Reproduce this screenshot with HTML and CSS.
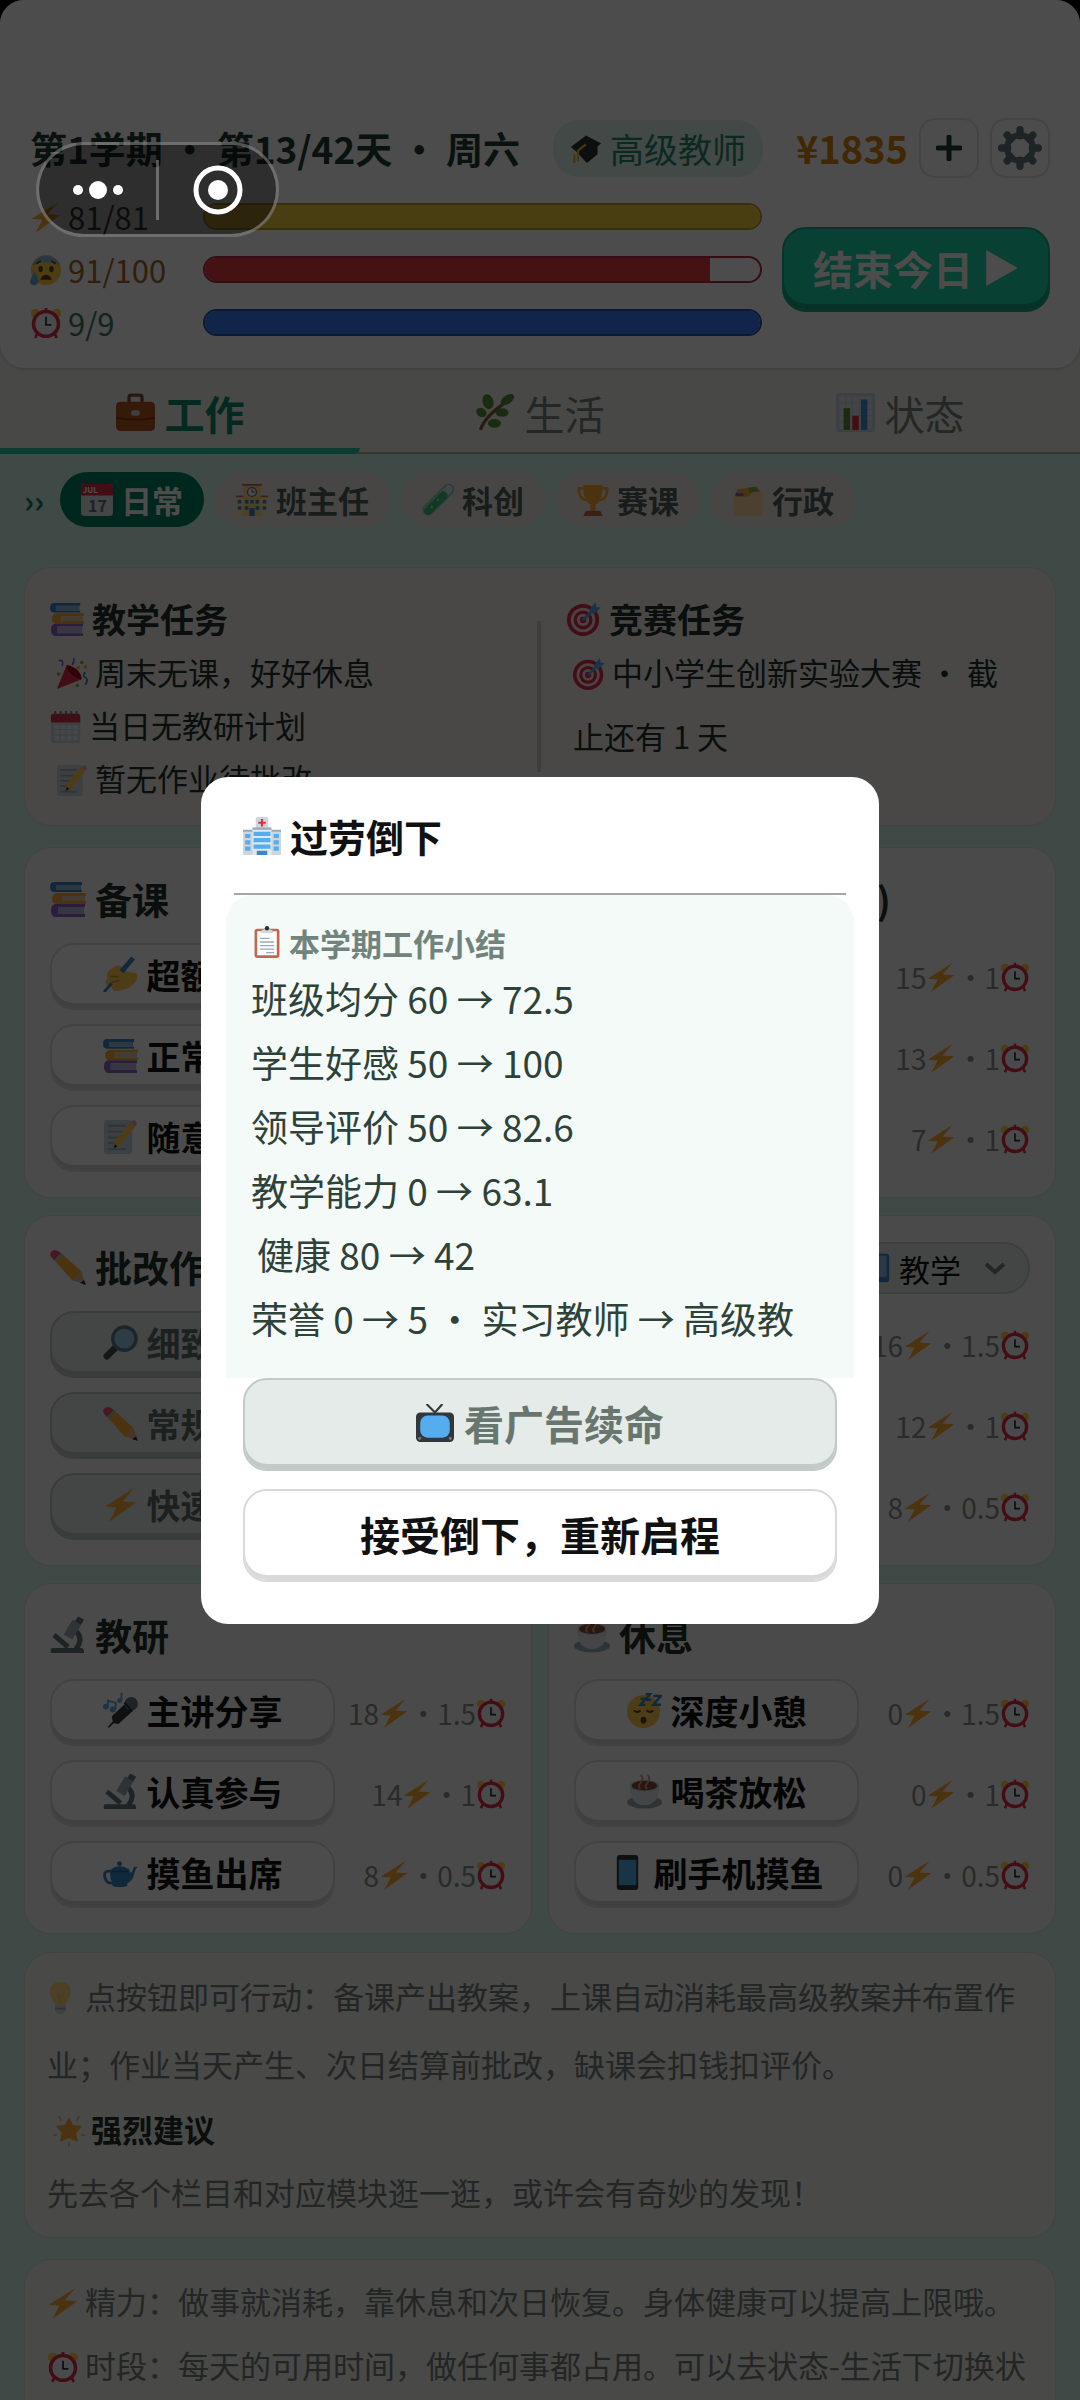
FILE: index.html
```html
<!DOCTYPE html>
<html lang="zh-CN">
<head>
    <meta charset="UTF-8">
    <meta name="viewport" content="width=device-width, initial-scale=1.0">
    <title>第1学期</title>
    <link rel="stylesheet" href="styles.css">
</head>
<body>
    <!-- Icon sprite -->
    <svg class="sprite" aria-hidden="true">
        <symbol id="i-bolt" viewBox="0 0 36 36"><path fill="#ffac33" d="M32 1 2 20l12 1-8 15 28-20-14-1z"/></symbol>
        <symbol id="i-clock" viewBox="0 0 36 36"><circle cx="6" cy="7" r="5" fill="#ffcc4d"/><circle cx="30" cy="7" r="5" fill="#ffcc4d"/><path d="m8 30-2 5M28 30l2 5M18 1v5" stroke="#dd2e44" stroke-width="3"/><circle cx="18" cy="19" r="14" fill="#f5f8fa" stroke="#dd2e44" stroke-width="4"/><path d="M18 11v9h6" fill="none" stroke="#292f33" stroke-width="2"/></symbol>
        <symbol id="i-anxious" viewBox="0 0 36 36"><circle cx="18" cy="18" r="17" fill="#ffcc4d"/><path fill="#8ab8e0" d="M2 13a17 17 0 0 1 32 0c-9-5-23-5-32 0z"/><ellipse cx="12" cy="17" rx="2.500" ry="3.500" fill="#664500"/><ellipse cx="24" cy="17" rx="2.500" ry="3.500" fill="#664500"/><path d="M13 28c2-5 8-5 10 0zM7 11l5-3M29 11l-5-3" fill="#664500" stroke="#664500" stroke-width="2"/><path fill="#5dadec" d="M5 20c4 6 5 9 4 12-2 5-9 4-9-1 0-3 3-6 5-11z"/></symbol>
        <symbol id="i-cap" viewBox="0 0 36 36"><path fill="#292f33" d="M18 4 1 17l6 5 12 13 12-10V16l4-3z"/><path fill="none" stroke="#ffac33" stroke-width="2.500" d="m18 14-9 7v12M5 25v10"/></symbol>
        <symbol id="i-gear" viewBox="0 0 36 36"><g stroke="#66757f" stroke-width="6" stroke-linecap="round"><path d="M18 3v5M18 28v5M3 18h5M28 18h5M7.500 7.500l3 3M25.500 25.500l3 3M7.500 28.500l3-3M25.500 10.500l3-3"/></g><circle cx="18" cy="18" r="10.500" fill="none" stroke="#66757f" stroke-width="5"/></symbol>
        <symbol id="i-briefcase" viewBox="0 0 36 36"><path fill="none" stroke="#8a4b38" stroke-width="3" d="M12 9V4q0-2 2-2h8q2 0 2 2v5"/><rect y="8" width="36" height="27" rx="4" fill="#b3541e"/><path fill="#8a3f12" d="M0 22q18 3 36 0v2q-18 3-36 0z"/><rect x="14" y="16" width="8" height="5" rx="2" fill="#ccd6dd"/></symbol>
        <symbol id="i-herb" viewBox="0 0 36 36"><path d="M4 34Q9 20 30 7" fill="none" stroke="#8a5a3c" stroke-width="3"/><g fill="#5c913b"><ellipse cx="11" cy="8" rx="5" ry="7" transform="rotate(-15 11 8)"/><ellipse cx="29" cy="6" rx="7" ry="4" transform="rotate(-35 29 6)"/><ellipse cx="5" cy="18" rx="5" ry="4" transform="rotate(30 5 18)"/><ellipse cx="24" cy="18" rx="6" ry="4"/><ellipse cx="17" cy="28" rx="6" ry="4"/></g></symbol>
        <symbol id="i-chart" viewBox="0 0 36 36"><rect width="36" height="36" rx="3" fill="#ccd6dd"/><path d="M3 3h30v30H3z" fill="#e1e8ed"/><path stroke="#ccd6dd" d="M3 9h30M3 15h30M3 21h30M3 27h30M9 3v30M15 3v30M21 3v30M27 3v30"/><path fill="#5c913b" d="M7 14h6v20H7z"/><path fill="#dd2e44" d="M15 21h6v13h-6z"/><path fill="#3b94d9" d="M23 6h6v28h-6z"/></symbol>
        <symbol id="i-school" viewBox="0 0 36 36"><path fill="#ffe8b6" d="M0 14h36v22H0z"/><path fill="#ffd983" d="M8 0h20v36H8z"/><path fill="#c1694f" d="M0 13h8v2H0zM28 13h8v2h-8zM7 0h22v2H7z"/><circle cx="18" cy="9" r="5" fill="#fff" stroke="#66757f" stroke-width="1.500"/><path stroke="#292f33" fill="none" d="M18 6v3h3"/><g fill="#3b88c3"><path d="M2 18h4v4H2zM2 25h4v4H2zM30 18h4v4h-4zM30 25h4v4h-4zM10 18h4v4h-4zM16 18h4v4h-4zM22 18h4v4h-4zM10 25h4v4h-4zM22 25h4v4h-4zM15 27h6v9h-6z"/></g></symbol>
        <symbol id="i-tube" viewBox="0 0 36 36"><path d="M30 6 7 29" stroke="#88c9b8" stroke-width="13" stroke-linecap="round"/><path d="M30 6 7 29" stroke="#d5e8ee" stroke-width="9" stroke-linecap="round"/><path d="M24 13 7 30" stroke="#3fbf74" stroke-width="9" stroke-linecap="round"/><circle cx="11" cy="26" r="1.500" fill="#a6f0bf"/><circle cx="18" cy="18" r="1.500" fill="#a6f0bf"/></symbol>
        <symbol id="i-trophy" viewBox="0 0 36 36"><path d="M8 5H2q0 13 9 13M28 5h6q0 13-9 13" fill="none" stroke="#ffac33" stroke-width="3"/><path fill="#ffac33" d="M7 1h22q0 18-8 22v7h-6v-7Q7 19 7 1z"/><path fill="#c1694f" d="M10 30h16l3 6H7z"/></symbol>
        <symbol id="i-folder" viewBox="0 0 36 36"><path fill="#ffac33" d="M3 14 6 6l22-3 5 7v6H3z"/><path fill="#77b255" d="m18 4 8-1 4 5-10 2z"/><path fill="#9266cc" d="M4 10h9v4H4z"/><path fill="#ffd9a0" d="M1 14h18l4-5h9q3 0 3 4v19q0 4-4 4H4q-3 0-3-4z"/></symbol>
        <symbol id="i-books" viewBox="0 0 36 36"><path fill="#3b88c3" d="M4 1h28v3H7v5h25v2H4Q0 11 0 6t4-5z"/><path fill="#8fb8da" d="M6 4h25v5H6z"/><path fill="#ffac33" d="M6 12h30v3H12v5h24v3H6q-4-1-4-5t4-6z"/><path fill="#e1c9a8" d="M12 15h23v5H12z"/><path fill="#9266cc" d="M5 23h30v3H8v7h27v3H5q-4-1-4-6.500T5 23z"/><path fill="#b9b4dd" d="M8 26h26v7H8z"/></symbol>
        <symbol id="i-party" viewBox="0 0 36 36"><path fill="#dd2e44" d="M12 8 1 35l28-11q-2-13-17-16z"/><path fill="#a0041e" d="M12 8q2 13 17 16-2-13-17-16z"/><path d="M3 3q6-2 4 6M18 8q3-4 2-8" stroke="#9266cc" stroke-width="2" fill="none"/><path d="M33 16q-4 4 0 6t0 8" stroke="#3b88c3" stroke-width="2" fill="none"/><g fill="#77b255"><circle cx="29" cy="5" r="2"/><circle cx="24" cy="31" r="2"/><circle cx="3" cy="18" r="2"/></g><circle cx="33" cy="10" r="2" fill="#ffac33"/><circle cx="25" cy="11" r="2" fill="#ffac33"/></symbol>
        <symbol id="i-calendar" viewBox="0 0 36 36"><rect x="1" y="3" width="33" height="33" rx="4" fill="#ccd6dd"/><path fill="#dd2e44" d="M1 13V6q0-3 3-3h27q3 0 3 3v7z"/><path fill="#e9eff3" d="M5 16h26v17H5z"/><path stroke="#ccd6dd" stroke-width="1.500" d="M5 21h26M5 27h26M11 16v17M18 16v17M25 16v17"/><path stroke="#66757f" stroke-width="2" d="M6 0v6M12 0v6M18 0v6M24 0v6M30 0v6"/></symbol>
        <symbol id="i-memo" viewBox="0 0 36 36"><rect x="1" y="1" width="29" height="35" rx="3" fill="#ccd6dd"/><path stroke="#99aab5" stroke-width="2" d="M5 7h18M5 13h18M5 19h14M5 25h10M5 31h18"/><path fill="#ffcc4d" d="m12 22 16-18 5 4-15 19-7 2z"/><path fill="#f4a4a8" d="m28 4 3-3q3 0 4 4l-2 3z"/><path fill="#292f33" d="m12 26 3 2-4 2z"/></symbol>
        <symbol id="i-target" viewBox="0 0 36 36"><circle cx="17" cy="19" r="17" fill="#dd2e44"/><circle cx="17" cy="19" r="13" fill="#f5e1e4"/><circle cx="17" cy="19" r="10" fill="#dd2e44"/><circle cx="17" cy="19" r="6.500" fill="#f5e1e4"/><circle cx="17" cy="19" r="3.500" fill="#dd2e44"/><path stroke="#55acee" stroke-width="3" d="M17 19 29 7"/><path fill="#55acee" d="m24 8 6-8 1 5 5 1-7 6h-5z"/></symbol>
        <symbol id="i-pencil" viewBox="0 0 36 36"><path fill="#ffac33" d="m5 12 7-7 19 17 4 13-13-4z"/><path fill="#e9b48a" d="m22 31 9-9 4 13z"/><path fill="#292f33" d="m30 34 4-3 2 5z"/><path fill="#99c8b8" d="m3 10 7-7 3 3-7 7z"/><path fill="#f4506b" d="M1 8Q-1 4 2 2t6 0l3 2-7 7z"/></symbol>
        <symbol id="i-write" viewBox="0 0 36 36"><path fill="#ffcc4d" d="M7 13q8-6 12-3l5 5 11 2q2 8-8 14-8 4-16 4l-3-5 4-2-8 1q-3-5 1-7-3-5 2-9z"/><path stroke="#3b88c3" stroke-width="5" d="M31 1 19 15"/><path stroke="#3b88c3" stroke-width="3" d="M9 27 1 36"/><path stroke="#cf8f2e" stroke-width="1.500" fill="none" d="M7 20h9M9 26l8-2"/></symbol>
        <symbol id="i-magnifier" viewBox="0 0 36 36"><path stroke="#42505a" stroke-width="7" stroke-linecap="round" d="m12 24-8 8"/><circle cx="22" cy="14" r="12" fill="#9bcbe8" stroke="#5f7b94" stroke-width="3.500"/></symbol>
        <symbol id="i-microscope" viewBox="0 0 36 36"><path fill="#66757f" d="M2 31h30q2 0 2 5H1q-1-4 1-5z"/><path fill="none" stroke="#66757f" stroke-width="5" d="M26 14q8 8 0 18"/><path stroke="#99aab5" stroke-width="10" d="M27 5 18 20"/><path stroke="#66757f" stroke-width="7" d="m31 1-3 5"/><path stroke="#66757f" stroke-width="5" d="m4 18 14 12"/></symbol>
        <symbol id="i-mic" viewBox="0 0 36 36"><path fill="#31373d" d="m24 10 7 8-15 14-5-1-5 5-1-1 5-6-1-5z"/><circle cx="29" cy="11" r="7" fill="#66757f"/><path stroke="#292f33" stroke-width="2" d="m22 10 8 9"/><g fill="#5dadec"><circle cx="3" cy="14" r="3"/><circle cx="10" cy="17" r="3"/><circle cx="17" cy="8" r="2.500"/></g><path d="M5 14V8l8 2v7M19 8V0" stroke="#5dadec" stroke-width="2" fill="none"/></symbol>
        <symbol id="i-teapot" viewBox="0 0 36 36"><path fill="#3b88c3" d="M8 15q9-7 19 0 1 5 3 2l2-5h4q-3 2-4 8t-7 9q2 4-8 4T10 29q-4-5-2-14z"/><circle cx="17" cy="9" r="2.500" fill="#3b88c3"/><path d="M9 17q-9-2-7 6t9 5" fill="none" stroke="#3b88c3" stroke-width="3"/><path d="M9 17h17" stroke="#226699" stroke-width="1.500"/></symbol>
        <symbol id="i-coffee" viewBox="0 0 36 36"><ellipse cx="18" cy="29" rx="18" ry="6.500" fill="#99aab5"/><path fill="#e1e8ed" d="M3 12h30q0 20-15 20T3 12z"/><ellipse cx="18" cy="12" rx="15" ry="6" fill="#ccd6dd"/><ellipse cx="18" cy="12" rx="13" ry="5" fill="#8a4b38"/><path d="M14 1q4 3 0 8t0 6M21 1q4 3 0 8t0 6" stroke="#d99e82" stroke-width="2" fill="none"/></symbol>
        <symbol id="i-sleep" viewBox="0 0 36 36"><circle cx="17" cy="19" r="17" fill="#ffcc4d"/><path d="M7 18q4 3 7 0M20 18q4 3 7 0" stroke="#664500" stroke-width="2" fill="none"/><ellipse cx="17" cy="28" rx="3" ry="3.500" fill="#664500"/><path d="M14 6h5l-5 6h5M19 1h5l-5 6h6M27 3h8l-8 9h8" stroke="#3b88c3" stroke-width="2.500" fill="none"/></symbol>
        <symbol id="i-phone" viewBox="0 0 36 36"><rect x="7" width="22" height="36" rx="3" fill="#31373d"/><path fill="#55acee" d="M9 5h18v26H9z"/></symbol>
        <symbol id="i-bulb" viewBox="0 0 36 36"><path fill="#ffd983" d="M15 0c8 0 12 5 12 11 0 7-5 8-6 15H9C8 19 3 18 3 11 3 5 7 0 15 0z"/><path stroke="#ffcc4d" stroke-width="2" fill="none" d="m11 13 3 4v9M19 13l-3 4"/><path fill="#ccd6dd" d="M9 26h12v6l-3 4h-6l-3-4z"/><path stroke="#99aab5" stroke-width="2" d="M9 30h12"/></symbol>
        <symbol id="i-star" viewBox="0 0 36 36"><path fill="#ffac33" stroke="#ffac33" stroke-width="2" stroke-linejoin="round" d="m18 4 4 8 9 1-6 7 2 9-9-4-9 4 2-9-6-7 9-1z"/><path stroke="#e0c07a" stroke-width="2" stroke-linecap="round" d="m7 2 2 4M29 2l-2 4M1 23l3-1M35 23l-3-1M18 31v4"/></symbol>
        <symbol id="i-hospital" viewBox="0 0 36 36"><path fill="#ccd6dd" d="M0 13h36v23H0zM12 2q0-2 2-2h8q2 0 2 2v10H12z"/><path fill="#e1e8ed" d="M9 11h18v25H9z"/><path fill="#99aab5" d="M0 12h9v2H0zM27 12h9v2h-9zM9 10h18v2H9z"/><path stroke="#dd2e44" stroke-width="2" d="M18 2v7M14.500 5.500h7"/><g fill="#55acee"><path d="M10 14h16v4H10zM10 20h16v4H10zM10 26h16v4H10zM2 16h5v4H2zM2 22h5v4H2zM2 28h5v4H2zM29 16h5v4h-5zM29 22h5v4h-5zM29 28h5v4h-5z"/></g><path fill="#3b88c3" d="M13 32h10v4H13z"/></symbol>
        <symbol id="i-clipboard" viewBox="0 0 36 36"><rect x="4" y="3" width="28" height="33" rx="3" fill="#c1694f"/><path fill="#fff" d="M7 6h22v27H7z"/><path fill="#ccd6dd" d="M11 8q0-4 4-4 0-3 3-3t3 3q4 0 4 4z"/><circle cx="18" cy="2.500" r="2.500" fill="#292f33"/><path stroke="#99aab5" stroke-width="1.500" d="M10 14h11M10 18h16M10 22h16M10 26h16M17 30h9"/></symbol>
        <symbol id="i-tv" viewBox="0 0 36 36"><path stroke="#31373d" stroke-width="2" fill="none" d="m10 0 8 8 7-8"/><rect y="8" width="36" height="28" rx="4" fill="#31373d"/><rect x="4" y="11" width="28" height="21" rx="7" fill="#55acee"/><circle cx="3.500" cy="32.500" r="1.500" fill="#66757f"/><circle cx="32.500" cy="32.500" r="1.500" fill="#66757f"/></symbol>
        <symbol id="i-book" viewBox="0 0 36 36"><rect x="2" y="2" width="32" height="32" rx="3" fill="#3b88c3"/><path fill="#8fc0e8" d="M5 4h26v24H5z"/></symbol>
    </svg>

    <div class="app">
        <header class="header">
            <div class="header-top">
                <h1>第1学期 ・ 第13/42天 ・ 周六</h1>
                <span class="role"><svg class="icon"><use href="#i-cap"/></svg>高级教师</span>
                <span class="money">¥1835</span>
                <button class="square-btn" type="button" aria-label="充值"><svg class="plus" viewBox="0 0 26 26"><path d="M13 2v22M2 13h22"/></svg></button>
                <button class="square-btn" type="button" aria-label="设置"><svg class="gear"><use href="#i-gear"/></svg></button>
            </div>
            <div class="header-stats">
                <div class="stats">
                    <div class="stat energy"><span class="stat-label"><svg class="icon"><use href="#i-bolt"/></svg>81/81</span><div class="bar"><div class="fill" style="width: 100%"></div></div></div>
                    <div class="stat stress"><span class="stat-label"><svg class="icon"><use href="#i-anxious"/></svg>91/100</span><div class="bar"><div class="fill" style="width: 91%"></div></div></div>
                    <div class="stat time"><span class="stat-label"><svg class="icon"><use href="#i-clock"/></svg>9/9</span><div class="bar"><div class="fill" style="width: 100%"></div></div></div>
                </div>
                <button class="end-day" type="button">结束今日 <svg viewBox="0 0 32 36"><path d="M1 1v34l30-17z"/></svg></button>
            </div>
        </header>

        <nav class="tabs">
            <button class="tab active" type="button"><svg class="icon"><use href="#i-briefcase"/></svg>工作</button>
            <button class="tab" type="button"><svg class="icon"><use href="#i-herb"/></svg>生活</button>
            <button class="tab" type="button"><svg class="icon"><use href="#i-chart"/></svg>状态</button>
        </nav>

        <main class="content">
            <div class="pills">
                <span class="more">››</span>
                <button class="pill active" type="button"><svg class="icon" viewBox="0 0 36 36"><rect width="36" height="36" rx="4" fill="#e0e7ec"/><path fill="#dd2e44" d="M0 13V4q0-4 4-4h28q4 0 4 4v9z"/><text x="2" y="10" font-size="9" fill="#fff">JUL</text><text x="8" y="31" font-size="18" fill="#66757f">17</text></svg>日常</button>
                <button class="pill" type="button"><svg class="icon"><use href="#i-school"/></svg>班主任</button>
                <button class="pill" type="button"><svg class="icon"><use href="#i-tube"/></svg>科创</button>
                <button class="pill" type="button"><svg class="icon"><use href="#i-trophy"/></svg>赛课</button>
                <button class="pill" type="button"><svg class="icon"><use href="#i-folder"/></svg>行政</button>
            </div>

            <section class="card tasks">
                <div class="task-col">
                    <h2><svg class="icon"><use href="#i-books"/></svg>教学任务</h2>
                    <p class="indent"><svg class="icon"><use href="#i-party"/></svg>周末无课，好好休息</p>
                    <p><svg class="icon"><use href="#i-calendar"/></svg>当日无教研计划</p>
                    <p class="indent"><svg class="icon"><use href="#i-memo"/></svg>暂无作业待批改</p>
                </div>
                <div class="divider"></div>
                <div class="task-col wide">
                    <h2><svg class="icon"><use href="#i-target"/></svg>竞赛任务</h2>
                    <p class="indent"><svg class="icon"><use href="#i-target"/></svg>中小学生创新实验大赛 ・ 截止还有 1 天</p>
                </div>
            </section>

            <div class="grid">
                <section class="card">
                    <h2><svg class="icon"><use href="#i-books"/></svg>备课</h2>
                    <div class="action"><button type="button"><svg class="icon"><use href="#i-write"/></svg>超额备课</button><span class="cost">18<svg class="icon"><use href="#i-bolt"/></svg>・1.5<svg class="icon"><use href="#i-clock"/></svg></span></div>
                    <div class="action"><button type="button"><svg class="icon"><use href="#i-books"/></svg>正常备课</button><span class="cost">14<svg class="icon"><use href="#i-bolt"/></svg>・1<svg class="icon"><use href="#i-clock"/></svg></span></div>
                    <div class="action"><button type="button"><svg class="icon"><use href="#i-memo"/></svg>随意备课</button><span class="cost">8<svg class="icon"><use href="#i-bolt"/></svg>・0.5<svg class="icon"><use href="#i-clock"/></svg></span></div>
                </section>
                <section class="card">
                    <h2><svg class="icon"><use href="#i-school"/></svg>课堂授课 (0+12)</h2>
                    <div class="action"><button type="button">精彩授课</button><span class="cost">15<svg class="icon"><use href="#i-bolt"/></svg>・1<svg class="icon"><use href="#i-clock"/></svg></span></div>
                    <div class="action"><button type="button">正常授课</button><span class="cost">13<svg class="icon"><use href="#i-bolt"/></svg>・1<svg class="icon"><use href="#i-clock"/></svg></span></div>
                    <div class="action"><button type="button">随意授课</button><span class="cost">7<svg class="icon"><use href="#i-bolt"/></svg>・1<svg class="icon"><use href="#i-clock"/></svg></span></div>
                </section>

                <section class="card">
                    <h2><svg class="icon"><use href="#i-pencil"/></svg>批改作业</h2>
                    <div class="action"><button type="button" disabled><svg class="icon"><use href="#i-magnifier"/></svg>细致批改</button><span class="cost">16<svg class="icon"><use href="#i-bolt"/></svg>・1.5<svg class="icon"><use href="#i-clock"/></svg></span></div>
                    <div class="action"><button type="button" disabled><svg class="icon"><use href="#i-pencil"/></svg>常规批改</button><span class="cost">12<svg class="icon"><use href="#i-bolt"/></svg>・1<svg class="icon"><use href="#i-clock"/></svg></span></div>
                    <div class="action"><button type="button" disabled><svg class="icon"><use href="#i-bolt"/></svg>快速批改</button><span class="cost">8<svg class="icon"><use href="#i-bolt"/></svg>・0.5<svg class="icon"><use href="#i-clock"/></svg></span></div>
                </section>
                <section class="card">
                    <div class="card-head">
                        <h2>学习</h2>
                        <label class="picker" aria-label="方向">
                            <svg class="icon"><use href="#i-book"/></svg>
                            <select><option>教学</option><option>科研</option></select>
                            <svg class="caret" viewBox="0 0 22 14"><path d="m2 3 9 8 9-8"/></svg>
                        </label>
                    </div>
                    <div class="action"><button type="button">深度学习</button><span class="cost">16<svg class="icon"><use href="#i-bolt"/></svg>・1.5<svg class="icon"><use href="#i-clock"/></svg></span></div>
                    <div class="action"><button type="button">常规学习</button><span class="cost">12<svg class="icon"><use href="#i-bolt"/></svg>・1<svg class="icon"><use href="#i-clock"/></svg></span></div>
                    <div class="action"><button type="button">快速浏览</button><span class="cost">8<svg class="icon"><use href="#i-bolt"/></svg>・0.5<svg class="icon"><use href="#i-clock"/></svg></span></div>
                </section>

                <section class="card">
                    <h2><svg class="icon"><use href="#i-microscope"/></svg>教研</h2>
                    <div class="action"><button type="button"><svg class="icon"><use href="#i-mic"/></svg>主讲分享</button><span class="cost">18<svg class="icon"><use href="#i-bolt"/></svg>・1.5<svg class="icon"><use href="#i-clock"/></svg></span></div>
                    <div class="action"><button type="button"><svg class="icon"><use href="#i-microscope"/></svg>认真参与</button><span class="cost">14<svg class="icon"><use href="#i-bolt"/></svg>・1<svg class="icon"><use href="#i-clock"/></svg></span></div>
                    <div class="action"><button type="button"><svg class="icon"><use href="#i-teapot"/></svg>摸鱼出席</button><span class="cost">8<svg class="icon"><use href="#i-bolt"/></svg>・0.5<svg class="icon"><use href="#i-clock"/></svg></span></div>
                </section>
                <section class="card">
                    <h2><svg class="icon"><use href="#i-coffee"/></svg>休息</h2>
                    <div class="action"><button type="button"><svg class="icon"><use href="#i-sleep"/></svg>深度小憩</button><span class="cost">0<svg class="icon"><use href="#i-bolt"/></svg>・1.5<svg class="icon"><use href="#i-clock"/></svg></span></div>
                    <div class="action"><button type="button"><svg class="icon"><use href="#i-coffee"/></svg>喝茶放松</button><span class="cost">0<svg class="icon"><use href="#i-bolt"/></svg>・1<svg class="icon"><use href="#i-clock"/></svg></span></div>
                    <div class="action"><button type="button"><svg class="icon"><use href="#i-phone"/></svg>刷手机摸鱼</button><span class="cost">0<svg class="icon"><use href="#i-bolt"/></svg>・0.5<svg class="icon"><use href="#i-clock"/></svg></span></div>
                </section>
            </div>

            <section class="card note">
                <p class="lead"><svg class="icon"><use href="#i-bulb"/></svg>点按钮即可行动：备课产出教案，上课自动消耗最高级教案并布置作业；作业当天产生、次日结算前批改，缺课会扣钱扣评价。</p>
                <h3><svg class="icon"><use href="#i-star"/></svg>强烈建议</h3>
                <p>先去各个栏目和对应模块逛一逛，或许会有奇妙的发现！</p>
            </section>

            <section class="card note">
                <p><svg class="icon"><use href="#i-bolt"/></svg>精力：做事就消耗，靠休息和次日恢复。身体健康可以提高上限哦。</p>
                <p><svg class="icon"><use href="#i-clock"/></svg>时段：每天的可用时间，做任何事都占用。可以去状态-生活下切换状态。</p>
            </section>
        </main>
    </div>

    <div class="overlay">
        <div class="modal" role="dialog" aria-labelledby="modal-title">
            <h2 id="modal-title"><svg class="icon"><use href="#i-hospital"/></svg>过劳倒下</h2>
            <div class="rule"></div>
            <div class="summary">
                <h3><svg class="icon"><use href="#i-clipboard"/></svg>本学期工作小结</h3>
                <p>班级均分 60 → 72.5</p>
                <p>学生好感 50 → 100</p>
                <p>领导评价 50 → 82.6</p>
                <p>教学能力 0 → 63.1</p>
                <p class="indent">健康 80 → 42</p>
                <p>荣誉 0 → 5 ・ 实习教师 → 高级教</p>
            </div>
            <div class="modal-actions">
                <button type="button" disabled><svg class="icon"><use href="#i-tv"/></svg>看广告续命</button>
                <button type="button">接受倒下，重新启程</button>
            </div>
        </div>
    </div>

    <!-- Floating capsule of the host app -->
    <div class="capsule">
        <button type="button" aria-label="更多"><svg viewBox="0 0 52 20"><circle cx="6" cy="10" r="5"/><circle cx="26" cy="10" r="9"/><circle cx="46" cy="10" r="5"/></svg></button>
        <button type="button" aria-label="关闭"><svg viewBox="0 0 52 52"><circle cx="26" cy="26" r="22" fill="none" stroke="#fff" stroke-width="5"/><circle cx="26" cy="26" r="10"/></svg></button>
    </div>
</body>
</html>
```
FILE: styles.css
```css
* {
    box-sizing: border-box;
    margin: 0;
    padding: 0;
}
html {
    background-color: #000;
}
body {
    font-family: "Noto Sans CJK SC", sans-serif;
    font-size: 31px;
    color: #24332e;
}
button, select {
    font-family: inherit;
    font-size: inherit;
    color: inherit;
    border: none;
    background: none;
    cursor: pointer;
}
.sprite {
    display: none;
}
.icon {
    width: 32px;
    height: 32px;
    flex: none;
}
.app {
    height: 100vh;
    overflow: hidden;
    display: flex;
    flex-direction: column;
    background-color: #d4f5ec;
    border-radius: 24px 24px 0 0;
}

/* Header */
.header {
    background-color: #fff;
    padding: 118px 30px 32px;
    border-radius: 0 0 24px 24px;
    box-shadow: 0 1px 3px rgba(0, 0, 0, 0.2);
    z-index: 1;
}
.header-top {
    display: flex;
    align-items: center;
    gap: 11px;
}
.header h1 {
    flex: 1;
    font-size: 37px;
    line-height: 60px;
    white-space: nowrap;
    color: #1f3d34;
}
.role {
    display: flex;
    align-items: center;
    gap: 8px;
    height: 57px;
    padding: 0 17px;
    border-radius: 26px;
    background-color: #e0f3ed;
    color: #2a8a6e;
    font-size: 34px;
}
.money {
    margin-left: 22px;
    font-size: 38px;
    line-height: 60px;
    font-weight: bold;
    color: #d98410;
}
.square-btn {
    width: 60px;
    height: 60px;
    border: 2px solid #e4e4e4;
    border-radius: 16px;
    display: flex;
    align-items: center;
    justify-content: center;
}
.plus {
    width: 26px;
    height: 26px;
    stroke: #1f3d34;
    stroke-width: 5;
    stroke-linecap: round;
}
.gear {
    width: 44px;
    height: 44px;
}
.header-stats {
    display: flex;
    align-items: center;
    gap: 20px;
    margin-top: 25px;
}
.stats {
    flex: 1;
    display: flex;
    flex-direction: column;
    gap: 26px;
}
.stat {
    display: flex;
    align-items: center;
    height: 27px;
}
.stat-label {
    display: flex;
    align-items: center;
    gap: 6px;
    width: 173px;
    line-height: 27px;
}
.bar {
    flex: 1;
    height: 27px;
    border: 2px solid;
    border-radius: 14px;
    overflow: hidden;
}
.fill {
    height: 100%;
}
.energy .stat-label { color: #3d4a45; }
.energy .bar { border-color: #c49f2a; }
.energy .fill { background-color: #f4cb3c; }
.stress .stat-label { color: #a5692f; }
.stress .bar { border-color: #b32c42; }
.stress .fill { background-color: #e63f44; }
.time .stat-label { color: #3f7a68; }
.time .bar { border-color: #2a55a8; }
.time .fill { background-color: #3b78f6; }
.end-day {
    display: flex;
    align-items: center;
    justify-content: center;
    gap: 12px;
    width: 268px;
    height: 85px;
    padding-bottom: 4px;
    border: 2px solid #1aae8d;
    border-radius: 24px;
    background-color: #21d5ad;
    box-shadow: inset 0 -6px 0 #15a584;
    color: #fff;
    font-size: 40px;
    font-weight: bold;
}
.end-day svg {
    width: 34px;
    height: 38px;
    fill: #fff;
}

/* Tabs */
.tabs {
    display: flex;
    margin-top: -24px;
    padding-top: 24px;
    background-color: #f2f2ee;
    border-bottom: 2px solid #a9b8b3;
}
.tab {
    flex: 1;
    display: flex;
    align-items: center;
    justify-content: center;
    gap: 10px;
    height: 86px;
    padding-top: 9px;
    margin-bottom: -2px;
    border-bottom: 6px solid transparent;
    font-size: 40px;
    color: #77827e;
}
.tab .icon {
    width: 39px;
    height: 39px;
}
.tab.active {
    font-weight: bold;
    color: #0f8a6c;
    border-bottom-color: #2bcaa4;
    border-radius: 0 0 6px 0;
}

/* Content */
.content {
    flex: 1;
    overflow: hidden;
    padding: 18px 24px 0;
}
.pills {
    display: flex;
    align-items: center;
    gap: 11px;
    margin-bottom: 40px;
}
.more {
    width: 25px;
    font-weight: bold;
    line-height: 55px;
    color: #167a62;
}
.pill {
    display: flex;
    align-items: center;
    gap: 8px;
    height: 55px;
    padding: 0 21px;
    border-radius: 28px;
    background-color: #f1ece8;
    color: #50635c;
    font-weight: bold;
}
.pill.active {
    background-color: #008267;
    color: #fff;
}
.card {
    padding: 25px;
    border: 1px solid #d9dedb;
    border-radius: 27px;
    background-color: #fbf9f7;
}
.card h2 {
    display: flex;
    align-items: center;
    gap: 9px;
    font-size: 37px;
    line-height: 50px;
    margin-bottom: 19px;
    white-space: nowrap;
}
.card h2 .icon {
    width: 36px;
    height: 36px;
}
.tasks {
    display: flex;
    height: 259px;
    background-color: #f3f0eb;
}
.task-col {
    width: 487px;
}
.task-col.wide {
    flex: 1;
    padding: 0 16px 0 26px;
}
.card.tasks h2 {
    gap: 8px;
    font-size: 34px;
    line-height: 52px;
    margin-bottom: 0;
}
.card.tasks h2 .icon {
    width: 34px;
    height: 34px;
}
.tasks p {
    line-height: 53px;
}
.tasks p .icon {
    margin-right: 7px;
    vertical-align: -5px;
}
.tasks .indent {
    padding-left: 6px;
}
.task-col.wide p {
    line-height: 64px;
    margin-top: -5px;
}
.divider {
    width: 4px;
    margin: 28px 0;
    background-color: #cfcbc7;
}
.grid {
    display: grid;
    grid-template-columns: 1fr 1fr;
    gap: 17px 16px;
    margin: 21px 0 18px;
}
.grid .card {
    padding-top: 26px;
}
.action {
    display: grid;
    grid-template-columns: 5fr 3fr;
    align-items: center;
    margin-bottom: 14px;
}
.action:last-child {
    margin-bottom: 0;
}
.action button {
    display: flex;
    align-items: center;
    justify-content: center;
    gap: 9px;
    height: 67px;
    padding-bottom: 4px;
    border: 2px solid #dcdcdc;
    border-radius: 24px;
    background-color: #fdfdfd;
    box-shadow: inset 0 -5px 0 #d6d6d6;
    font-size: 34px;
    font-weight: bold;
    color: #111;
    white-space: nowrap;
}
.action button .icon {
    width: 35px;
    height: 35px;
}
.action button:disabled {
    border-color: #c2cac7;
    background-color: #e4ebe8;
    box-shadow: inset 0 -5px 0 #c2cac7;
    color: #5f6d67;
}
.cost {
    display: flex;
    align-items: center;
    justify-content: flex-end;
    white-space: nowrap;
    font-size: 28px;
    color: #85928e;
}
.cost .icon {
    width: 30px;
    height: 30px;
}
.card-head {
    display: flex;
    justify-content: space-between;
}
.picker {
    position: relative;
    height: 52px;
}
.picker select {
    appearance: none;
    width: 200px;
    height: 52px;
    padding-left: 67px;
    border: 2px solid #c9d3cf;
    border-radius: 26px;
    background-color: #e4ebe8;
    color: #111;
}
.picker .icon {
    position: absolute;
    left: 29px;
    top: 10px;
}
.picker .caret {
    position: absolute;
    right: 24px;
    top: 19px;
    width: 22px;
    height: 14px;
    fill: none;
    stroke: #77827e;
    stroke-width: 4;
}
.note {
    margin-bottom: 21px;
    padding: 9px 20px 13px 22px;
    background-color: #f3f3f0;
    color: #75807c;
}
.note p {
    line-height: 64px;
}
.note .lead {
    line-height: 68px;
}
.note h3 {
    padding-left: 6px;
    font-size: 31px;
    line-height: 62px;
    color: #24332e;
}
.note .icon {
    margin-right: 6px;
    vertical-align: -5px;
}

/* Dialog */
.overlay {
    position: fixed;
    inset: 0;
    z-index: 10;
    display: flex;
    align-items: center;
    justify-content: center;
    background-color: rgba(0, 0, 0, 0.7);
}
.modal {
    width: 90%;
    max-width: 678px;
    padding: 0 25px 42px;
    border-radius: 27px;
    background-color: #fff;
}
.modal h2 {
    display: flex;
    align-items: center;
    gap: 9px;
    padding: 25px 17px 23px;
    font-size: 38px;
    line-height: 68px;
    color: #111;
}
.modal h2 .icon {
    width: 38px;
    height: 38px;
}
.rule {
    height: 2px;
    margin: 0 8px;
    background-color: #aaa2a4;
}
.summary {
    padding: 24px 25px 28px;
    border-radius: 27px 27px 0 0;
    background-color: #f3faf7;
    color: #2f4239;
    font-size: 37px;
    line-height: 64px;
    white-space: nowrap;
    overflow: hidden;
}
.summary h3 {
    display: flex;
    align-items: center;
    gap: 6px;
    font-size: 31px;
    line-height: 47px;
    color: #70837c;
}
.summary .indent {
    padding-left: 6px;
}
.modal-actions {
    display: flex;
    flex-direction: column;
    gap: 18px;
    padding: 0 17px;
}
.modal-actions button {
    display: flex;
    align-items: center;
    justify-content: center;
    gap: 10px;
    height: 93px;
    padding-bottom: 3px;
    border: 2px solid #d9d9d9;
    border-radius: 24px;
    background-color: #fff;
    box-shadow: inset 0 -5px 0 #d9d9d9;
    font-size: 40px;
    font-weight: bold;
    color: #111;
}
.modal-actions button:disabled {
    border-color: #c2cac7;
    background-color: #e4ebe8;
    box-shadow: inset 0 -5px 0 #c2cac7;
    color: #69766f;
}
.modal-actions .icon {
    width: 38px;
    height: 38px;
}

.capsule {
    position: fixed;
    left: 36px;
    top: 142px;
    z-index: 20;
    display: flex;
    align-items: center;
    width: 243px;
    height: 95px;
    border: 3px solid rgba(255, 255, 255, 0.3);
    border-radius: 48px;
    background-color: rgba(0, 0, 0, 0.4);
}
.capsule button {
    flex: 1;
    height: 60px;
    display: flex;
    align-items: center;
    justify-content: center;
}
.capsule button + button {
    border-left: 3px solid rgba(255, 255, 255, 0.3);
}
.capsule svg {
    width: 52px;
    fill: #fff;
}
```
